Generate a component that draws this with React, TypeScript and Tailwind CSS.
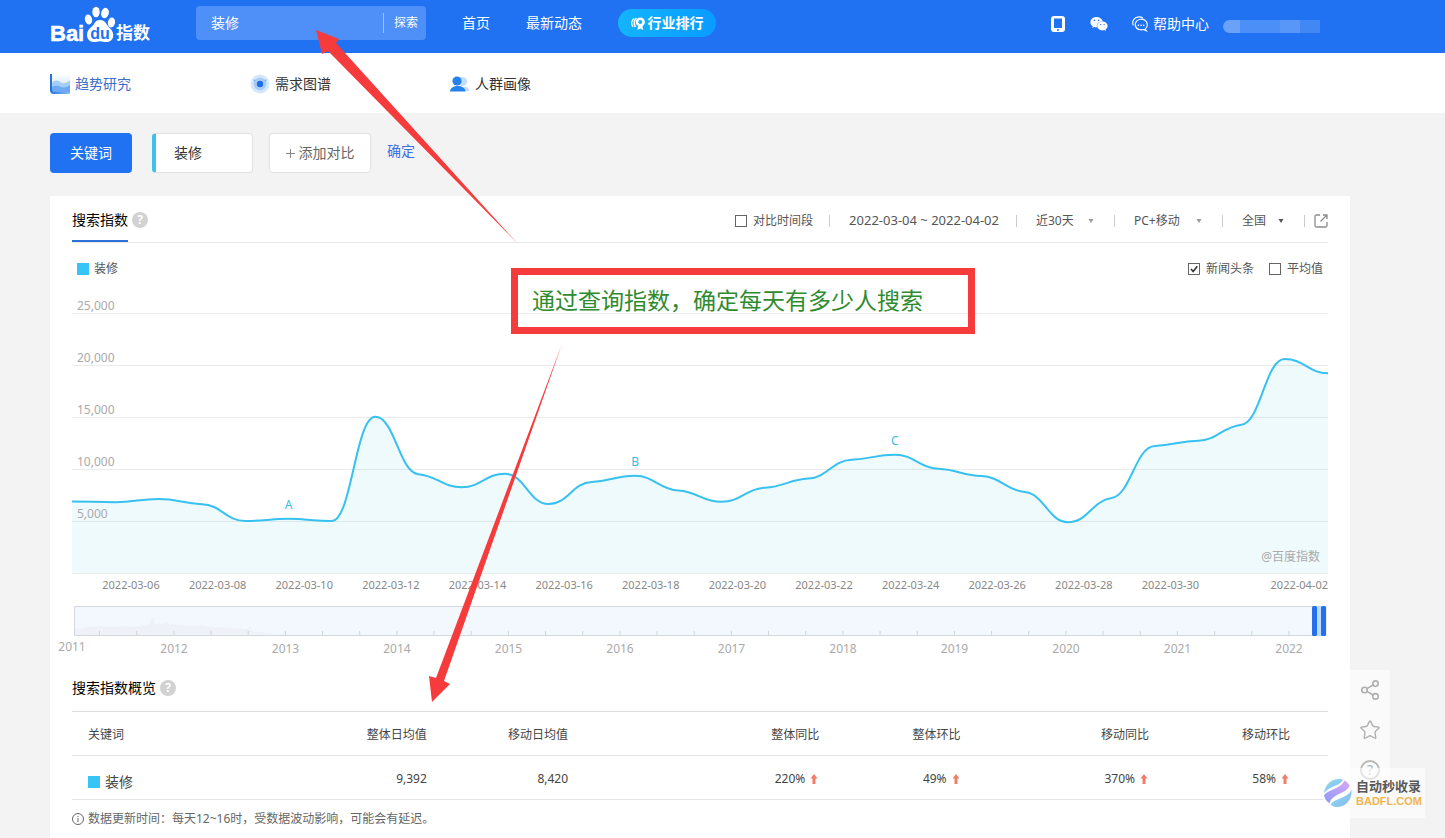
import { useState } from "react";
import { Share2, Star } from "lucide-react";
import { FaWeixin } from "react-icons/fa";

const fontClass = "font-['Noto_Sans','Noto_Sans_CJK_SC',sans-serif]";

// one value per day, 2022-03-04 to 2022-04-02
const daily = [
  6880, 6810, 7110, 6620, 5000, 5210, 4990, 15020, 9500, 8250, 9550, 6630, 8750, 9340, 7930,
  6850, 8200, 9080, 10900, 11370, 10020, 9320, 7780, 4880, 7210, 12210, 12720, 14260, 20570, 19200,
];

const CHART_W = 1256;
const STEP = CHART_W / (daily.length - 1);
const BASE = 282;

const yOf = (v: number) => BASE - (v / 5000) * 52;

function buildCurve(values: number[]) {
  const pts = values.map((v, i) => [i * STEP, yOf(v)]);
  // slope at each point, flat on peaks so that the curve never overshoots
  const slopes = pts.map((p, i) => {
    if (i === 0 || i === pts.length - 1) return 0;
    const before = (p[1] - pts[i - 1][1]) / STEP;
    const after = (pts[i + 1][1] - p[1]) / STEP;
    if (before * after <= 0) return 0;
    return (0.4 * before * after) / (before + after);
  });
  let d = `M${pts[0][0]},${pts[0][1]}`;
  for (let i = 1; i < pts.length; i++) {
    const c = STEP * 0.45;
    const [x0, y0] = pts[i - 1];
    const [x1, y1] = pts[i];
    d += `C${x0 + c},${y0 + slopes[i - 1] * c} ${x1 - c},${y1 - slopes[i] * c} ${x1},${y1}`;
  }
  return d;
}

const curve = buildCurve(daily);

const yLabels = [25000, 20000, 15000, 10000, 5000];

const xLabels = [
  "2022-03-06", "2022-03-08", "2022-03-10", "2022-03-12", "2022-03-14", "2022-03-16", "2022-03-18",
  "2022-03-20", "2022-03-22", "2022-03-24", "2022-03-26", "2022-03-28", "2022-03-30",
];

const marks = [
  { name: "A", day: 5, y: 218 },
  { name: "B", day: 13, y: 175 },
  { name: "C", day: 19, y: 154 },
];

const years = [2012, 2013, 2014, 2015, 2016, 2017, 2018, 2019, 2020, 2021, 2022];

const pct = (x: number) => `${(x / CHART_W) * 100}%`;

function Logo() {
  return (
    <svg className="block overflow-visible" width="104" height="42" viewBox="0 0 104 42" role="img" aria-label="Baidu 指数">
      <text x="0" y="35" fill="#fff" stroke="#fff" strokeWidth="0.5" fontFamily="Liberation Sans" fontWeight="700" fontSize="22">Bai</text>
      <g fill="#fff">
        <ellipse cx="38.500" cy="13.500" rx="3.600" ry="5" transform="rotate(-12 38.500 13.500)" />
        <ellipse cx="46" cy="6" rx="3.700" ry="5.200" />
        <ellipse cx="55" cy="7" rx="3.800" ry="5.200" transform="rotate(14 55 7)" />
        <ellipse cx="61.500" cy="16.500" rx="3.600" ry="5" transform="rotate(8 61.500 16.500)" />
        <path d="M50 14c-3 0-4.600 1.500-6 4-2 3.300-7 5-7 10.800 0 4.500 2.800 7.200 6.500 7.200 2.500 0 4.300-.8 6.500-.8s4 .8 6.500.8c4 0 6.800-2.700 6.800-7 0-5-4.800-7.500-6.800-11-1.400-2.500-3.500-4-6.500-4z" />
      </g>
      <text x="50" y="33" fill="#2072f3" fontFamily="Liberation Sans" fontWeight="700" fontSize="16" textAnchor="middle">du</text>
      <text x="66" y="33" fill="#fff" fontFamily="Noto Sans CJK SC" fontWeight="700" fontSize="17">指数</text>
    </svg>
  );
}

function RankIcon() {
  return (
    <svg width="14" height="13" viewBox="0 0 14 13" fill="none" stroke="#fff">
      <path d="M3 1.500C.6 3.500.2 7 2 10" strokeWidth="1.300" />
      <path d="M5.300 1C3.300 3.200 2.700 6.800 4.300 10" strokeWidth="1.500" />
      <circle cx="9.300" cy="5" r="3.300" strokeWidth="2.600" />
      <path d="M7 8.500L6.500 13l2.800-1.500L12 13l-.5-4.500z" fill="#fff" stroke="none" />
    </svg>
  );
}

function PhoneIcon() {
  return (
    <svg width="14" height="16" viewBox="0 0 14 16">
      <path fill="#fff" fillRule="evenodd" d="M3 0h8a3 3 0 013 3v10a3 3 0 01-3 3H3a3 3 0 01-3-3V3a3 3 0 013-3zm0 2.500v9.500h8V2.500zm4 10.600a1 1 0 100 2 1 1 0 000-2z" />
    </svg>
  );
}

function ChatIcon() {
  return (
    <svg width="16" height="16" viewBox="0 0 16 16" fill="none" stroke="#fff" strokeWidth="1.100" strokeLinecap="round">
      <path d="M1.200 9C-.4 4.800 2.600.9 7 .9c1.400 0 2.500.3 3.500.9" />
      <path d="M13.200 13.200c3-2.500 2.700-6.800-.2-8.900-2.600-1.800-6.300-1.400-8.400.8C2 8 3.300 13 8 13.800c1.300.2 2.400.1 3.500-.3l2.800 1.300z" />
      <path d="M6.300 9.300h.1M9 9.300h.1M11.700 9.300h.1" strokeWidth="1.600" />
    </svg>
  );
}

function TrendIcon() {
  return (
    <svg width="20" height="20" viewBox="0 0 20 20">
      <defs>
        <linearGradient id="trendSky" x1="0" y1="0" x2="0" y2="1">
          <stop offset="0" stopColor="#fff" />
          <stop offset="1" stopColor="#bfdcfa" />
        </linearGradient>
        <linearGradient id="trendBar" x1="0" y1="0" x2="1" y2="0">
          <stop offset="0" stopColor="#1f6fe0" />
          <stop offset="1" stopColor="#8fc1f7" />
        </linearGradient>
      </defs>
      <path d="M2 0h18v18H2z" fill="url(#trendSky)" />
      <path d="M2 9c3-3 5-3 8-1s6 2 10-2v12H2z" fill="#a4cdf8" />
      <path d="M2 13c4-2 6-1 9 0s6 0 9-2v7H2z" fill="#6eaaf2" />
      <path d="M0 0h2v15.500Q2 18 4.500 18H20v2H4q-4 0-4-4z" fill="url(#trendBar)" />
    </svg>
  );
}

function DemandIcon() {
  return (
    <svg width="20" height="20" viewBox="0 0 20 20">
      <circle cx="10" cy="10" r="9.500" fill="#d8e8fc" />
      <circle cx="10" cy="10" r="6.500" fill="#a9cdf8" />
      <circle cx="10" cy="10" r="3.200" fill="#1f6fe0" />
      <circle cx="4.500" cy="6.500" r="1" fill="#7fb3f5" />
      <circle cx="15.500" cy="6.500" r="1" fill="#7fb3f5" />
    </svg>
  );
}

function CrowdIcon() {
  return (
    <svg width="20" height="20" viewBox="0 0 20 20">
      <circle cx="12.500" cy="7.500" r="4.600" fill="#c3dcfb" />
      <path d="M10 17c0-4 8.500-7 9.500 0z" fill="#c3dcfb" />
      <circle cx="7" cy="7" r="4.600" fill="#2482ea" />
      <path d="M0 17.500c0-7.500 15.500-7.500 15.500 0z" fill="#2482ea" />
    </svg>
  );
}

function ExportIcon() {
  return (
    <svg width="14" height="14" viewBox="0 0 14 14" fill="none" stroke="#8c8c8c" strokeWidth="1.300">
      <path d="M6 1H2.500Q1 1 1 2.500v9Q1 13 2.500 13h9q1.500 0 1.500-1.500V8" />
      <path d="M9 1h4v4M13 1L6.500 7.500" />
    </svg>
  );
}

function HelpMark() {
  return (
    <span className="flex size-4 items-center justify-center rounded-full bg-[#d2d2d2] text-xs leading-4 font-bold text-white">?</span>
  );
}

function UpArrow() {
  return (
    <svg className="ml-[5px] inline-block" width="8" height="10" viewBox="0 0 8 10">
      <path d="M4 0l3.500 4.500H5.500V10h-3V4.500H.5z" fill="#f27c68" />
    </svg>
  );
}

const checkboxClass = "size-3 shrink-0 appearance-none border border-[#666] bg-white";

type CheckProps = { id: string; label: string; defaultChecked?: boolean };

function Check({ id, label, defaultChecked = false }: CheckProps) {
  const [on, setOn] = useState(defaultChecked);
  return (
    <span className="flex items-center gap-[6px]">
      <span className="relative flex">
        <input id={id} type="checkbox" checked={on} onChange={(e) => setOn(e.target.checked)} className={checkboxClass} />
        {on && (
          <svg className="pointer-events-none absolute inset-0" width="12" height="12" viewBox="0 0 12 12" fill="none" stroke="#333" strokeWidth="1.600">
            <path d="M3 6l2.200 2.500L9.300 3.300" />
          </svg>
        )}
      </span>
      <label htmlFor={id}>{label}</label>
    </span>
  );
}

type PickProps = { label: string; options: string[]; width: string; caret: string };

function Pick({ label, options, width, caret }: PickProps) {
  return (
    <div className="flex h-3 items-center gap-3 border-r border-[#ccc] pr-5 pl-[19px]">
      <select aria-label={label} className={`${width} appearance-none bg-transparent text-xs leading-5`}>
        {options.map((o) => (
          <option key={o}>{o}</option>
        ))}
      </select>
      <svg width="6" height="4" viewBox="0 0 6 4">
        <path d="M.5 0h5L3 4z" fill={caret} />
      </svg>
    </div>
  );
}

function Header() {
  return (
    <header className="flex h-[53px] items-start bg-[#2072f3] pr-[125px] pl-[50px] text-sm text-white">
      <a href="#" className="mt-[6px] mr-[42px] shrink-0">
        <Logo />
      </a>
      <form className="mt-[6px] flex h-[34px] w-[230px] shrink-0 items-center rounded-sm bg-[#4e90f7]" onSubmit={(e) => e.preventDefault()}>
        <input aria-label="关键词" defaultValue="装修" className="w-[187px] bg-transparent pl-[15px] leading-5 outline-none" />
        <button className="h-5 flex-1 border-l border-[#9cc1fb] pl-[2px] text-center text-xs leading-5">探索</button>
      </form>
      <nav className="ml-9 flex h-[46px] shrink-0 items-center gap-9">
        <a href="#">首页</a>
        <a href="#">最新动态</a>
        <a href="#" className="flex h-7 w-[98px] items-center justify-center gap-[3px] rounded-full bg-linear-to-r from-[#14b4fc] to-[#0a9bff] font-bold">
          <RankIcon />
          行业排行
        </a>
      </nav>
      <div className="ml-auto flex h-[47px] items-center">
        <button aria-label="手机版" className="mr-[25px]">
          <PhoneIcon />
        </button>
        <button aria-label="微信" className="mr-6">
          <FaWeixin size={18} />
        </button>
        <a href="#" className="mr-[14px] flex items-center gap-[5px]">
          <ChatIcon />
          帮助中心
        </a>
        <div className="mt-[5px] flex h-[13px] w-[97px] overflow-hidden rounded-l-full">
          <span className="w-[17px] bg-[#6aa2f8]" />
          <span className="w-[40px] bg-[#4c8ff6]" />
          <span className="w-[20px] bg-[#5896f7]" />
          <span className="flex-1 bg-[#4288f5]" />
        </div>
      </div>
    </header>
  );
}

function SubNav() {
  return (
    <nav className="flex h-[60px] items-center bg-white pt-px pl-[50px] text-sm text-[#333]">
      <a href="#" className="flex w-[200px] items-center gap-[5px] text-[#3c6ec8]">
        <TrendIcon />
        趋势研究
      </a>
      <a href="#" className="flex w-[200px] items-center gap-[5px]">
        <DemandIcon />
        需求图谱
      </a>
      <a href="#" className="flex w-[200px] items-center gap-[5px]">
        <CrowdIcon />
        人群画像
      </a>
    </nav>
  );
}

function KeywordBar() {
  return (
    <div className="flex h-10 text-sm">
      <button className="w-[82px] rounded-sm bg-[#2072f3] text-white">关键词</button>
      <input
        aria-label="关键词"
        defaultValue="装修"
        className="ml-5 w-[101px] rounded-sm border border-l-4 border-[#e0e0e0] border-l-[#3ec2ea] bg-white pl-[18px] text-[#333]"
      />
      <button className="ml-4 flex w-[102px] items-center justify-center gap-1 rounded-sm border border-[#e0e0e0] bg-white text-[#666]">
        <svg width="9" height="9" viewBox="0 0 9 9" stroke="#888">
          <path d="M4.500 0v9M0 4.500h9" />
        </svg>
        添加对比
      </button>
      <button className="ml-4 h-9 text-[#3c6fe0]">确定</button>
    </div>
  );
}

function TrendChart() {
  return (
    <svg className="block h-[302px] w-full overflow-visible" fontSize="12">
      <svg width="100%" height="302" viewBox={`0 0 ${CHART_W} 302`} preserveAspectRatio="none">
        {[...yLabels, 0].map((v) => (
          <path key={v} d={`M0,${yOf(v) + 0.5}H${CHART_W}`} stroke="#ebebeb" />
        ))}
        <path d={`${curve}V${BASE}H0Z`} fill="#2fc1e4" fillOpacity="0.08" />
        <path d={curve} fill="none" stroke="#37c1f0" strokeWidth="2" />
      </svg>
      {yLabels.map((v) => (
        <text key={v} x="5" y={yOf(v) - 3} fill="#aaa">
          {v.toLocaleString("en-US")}
        </text>
      ))}
      {marks.map((m) => (
        <text key={m.name} x={pct(m.day * STEP)} y={m.y} fill="#37bce8" textAnchor="middle">
          {m.name}
        </text>
      ))}
      <text x={pct(1248)} y="270" fill="#aaa" textAnchor="end">
        @百度指数
      </text>
      <g fill="#888" fontSize="11">
        {xLabels.map((d, i) => (
          <text key={d} x={pct(59 + i * STEP * 2)} y="298" textAnchor="middle">
            {d}
          </text>
        ))}
        <text x="100%" y="298" textAnchor="end">
          2022-04-02
        </text>
      </g>
    </svg>
  );
}

function RangeBar() {
  return (
    <svg className="block h-[52px] w-full overflow-visible" fontSize="12">
      <svg width="100%" height="30" viewBox={`0 0 ${CHART_W} 30`} preserveAspectRatio="none">
        <path d="M2.500,.5H1254V29.500H2.500z" fill="#f2f8fe" stroke="#d4d8dc" />
        <path
          d="M3 29v-6l8-1 5-1 12-1 10 1 14-1 12 1 8-2 6-1 1-6h3l1 6 10-1 2-2 2 3 12 1 14 1 6-1 10 2 20 1 16 1 3-3 3 6 30 2z"
          fill="#eef2f8"
        />
        {Array.from({ length: 33 }, (_, i) => (
          <path key={i} d={`M${27.500 + i * 37.170},25V29`} stroke="#cfd3d8" />
        ))}
        <path d="M1243 0h8v30h-8z" fill="#b9dcfb" />
        <rect x="1240" y="0" width="5" height="30" rx="1.500" fill="#2570ea" />
        <rect x="1249" y="0" width="5" height="30" rx="1.500" fill="#2570ea" />
      </svg>
      <text x="0" y="45" fill="#aaa" textAnchor="middle">
        2011
      </text>
      {years.map((y, i) => (
        <text key={y} x={pct(102 + i * 111.500)} y="47" fill="#aaa" textAnchor="middle">
          {y}
        </text>
      ))}
    </svg>
  );
}

function OverviewTable() {
  return (
    <table className="w-full table-fixed border-t border-[#ddd] text-xs text-[#444]">
      <colgroup>
        <col className="w-[17%]" />
        <col className="w-[11.25%]" />
        <col className="w-[11.25%]" />
        <col className="w-[20%]" />
        <col className="w-[11.25%]" />
        <col className="w-[15%]" />
        <col />
      </colgroup>
      <thead>
        <tr className="h-11 border-b border-[#e6e6e6] text-right">
          <th className="pt-[2px] pl-4 text-left font-normal">关键词</th>
          <th className="pt-[2px] font-normal">整体日均值</th>
          <th className="pt-[2px] font-normal">移动日均值</th>
          <th className="pt-[2px] font-normal">整体同比</th>
          <th className="pt-[2px] font-normal">整体环比</th>
          <th className="pt-[2px] font-normal">移动同比</th>
          <th className="pt-[2px] pr-[38px] font-normal">移动环比</th>
        </tr>
      </thead>
      <tbody>
        <tr className="h-11 border-b border-[#e6e6e6] text-right">
          <td className="pt-2 pl-4">
            <span className="flex items-center gap-[5px] text-sm">
              <i className="size-3 bg-[#37c5f5]" />
              装修
            </span>
          </td>
          <td className="pt-[2px]">9,392</td>
          <td className="pt-[2px]">8,420</td>
          <td className="pt-[2px] pr-px">220%<UpArrow /></td>
          <td className="pt-[2px] pr-px">49%<UpArrow /></td>
          <td className="pt-[2px] pr-px">370%<UpArrow /></td>
          <td className="pt-[2px] pr-[39px]">58%<UpArrow /></td>
        </tr>
      </tbody>
    </table>
  );
}

function SideTools() {
  return (
    <aside className="absolute top-[670px] right-[55px] flex h-[120px] w-10 flex-col items-center bg-[#fafafa] text-[#b0b0b0]">
      <button aria-label="分享" className="flex h-10 items-center">
        <Share2 size={22} strokeWidth={1.75} />
      </button>
      <button aria-label="收藏" className="flex h-10 items-center">
        <Star size={22} strokeWidth={1.5} />
      </button>
      <button aria-label="帮助" className="mt-[10px] flex size-5 items-center justify-center rounded-full border-2 border-[#b8b8b8] text-sm leading-4">
        ?
      </button>
    </aside>
  );
}

function Watermark() {
  return (
    <div className="absolute top-[768px] right-[20px] flex h-[50px] w-[102px] items-center gap-[3px] bg-white/60">
      <svg width="30" height="32" viewBox="0 0 30 32" className="shrink-0">
        <defs>
          <linearGradient id="swirlA" x1="0" y1="1" x2="1" y2="0">
            <stop offset="0" stopColor="#8b9cf5" />
            <stop offset="1" stopColor="#dba6f3" />
          </linearGradient>
          <linearGradient id="swirlB" x1="0" y1="0" x2="1" y2="1">
            <stop offset="0" stopColor="#8fe0ea" />
            <stop offset="1" stopColor="#86b6f5" />
          </linearGradient>
        </defs>
        <path d="M1 16C2 8 8 2 16 2c2 0 3 .3 4 .8C17 9 7 9 1 16z" fill="url(#swirlB)" />
        <path d="M1 18C6 12 18 12 21.500 3.500c2 1 4 3 5 5C24 17 9 16 6.500 26.500 3 24 1.500 21 1 18z" fill="url(#swirlA)" />
        <path d="M28.500 13c1 8-5 17-14 17-2.500 0-5-.8-7-2.300C11 21 24 22 28.500 13z" fill="url(#swirlB)" />
      </svg>
      <div className="font-bold whitespace-nowrap">
        <div className="text-[13px] leading-4 text-[#5a5a5a]">自动秒收录</div>
        <div className="font-['Liberation_Sans',sans-serif] text-[11px] leading-[14px] text-[#f0b54f]">BADFL.COM</div>
      </div>
    </div>
  );
}

function Annotations() {
  return (
    <>
      <svg className="pointer-events-none absolute top-0 left-0" width="600" height="710" fill="#f53b3b">
        <path d="M316 30L339 39L336 43L518 244L328 51L322 54z" />
        <path d="M562 344L444 681L450 684L432 702L429 676L436 678z" />
      </svg>
      <div className="absolute top-[268px] left-[511px] flex h-[66px] w-[464px] items-center border-[7px] border-[#f53b3b] pb-[2px] pl-[14px] text-[23px] leading-8 whitespace-nowrap text-[#2f8b30]">
        通过查询指数，确定每天有多少人搜索
      </div>
    </>
  );
}

export default function App() {
  return (
    <div lang="zh-CN" className={`relative flex min-h-screen flex-col bg-[#f3f3f3] ${fontClass}`}>
      <Header />
      <SubNav />
      <main className="flex flex-1 flex-col pt-5 pr-[95px] pl-[50px]">
        <KeywordBar />
        <section className="mt-[23px] flex-1 bg-white px-[22px] text-xs text-[#555]">
          <div className="flex h-[47px] items-stretch border-b border-[#e8e8e8]">
            <h2 className="flex items-center border-b-2 border-[#2f6fd8] pt-1 text-sm text-black">搜索指数</h2>
            <span className="ml-1 flex items-center pt-[2px]">
              <HelpMark />
            </span>
            <div className="ml-auto flex items-center pt-[3px]">
              <div className="flex h-3 items-center border-r border-[#ccc] pr-4">
                <Check id="compare" label="对比时间段" />
              </div>
              <button className="flex h-3 items-center border-r border-[#ccc] pr-[17px] pl-[19px] text-[13px]">2022-03-04 ~ 2022-04-02</button>
              <Pick label="时间" options={["近30天", "近7天"]} width="w-10" caret="#999" />
              <Pick label="设备" options={["PC+移动", "PC", "移动"]} width="w-[50px]" caret="#999" />
              <Pick label="地区" options={["全国"]} width="w-6" caret="#555" />
              <button aria-label="导出" className="ml-[9px]">
                <ExportIcon />
              </button>
            </div>
          </div>
          <div className="flex h-12 items-center justify-between pt-[3px] pr-[5px] pl-[5px]">
            <span className="flex items-center gap-[5px]">
              <i className="size-3 bg-[#37c5f5]" />
              装修
            </span>
            <div className="flex gap-[15px]">
              <Check id="news" label="新闻头条" defaultChecked />
              <Check id="average" label="平均值" />
            </div>
          </div>
          <TrendChart />
          <div className="mt-[13px]">
            <RangeBar />
          </div>
          <div className="flex h-[53px] items-center gap-1 pt-[6px]">
            <h2 className="text-sm text-black">搜索指数概览</h2>
            <HelpMark />
          </div>
          <OverviewTable />
          <p className="flex h-9 items-center gap-1 pt-px text-[#666]">
            <svg width="12" height="12" viewBox="0 0 12 12" fill="none" stroke="#666">
              <circle cx="6" cy="6" r="5.500" />
              <path d="M6 5v4M6 3v1" />
            </svg>
            数据更新时间：每天12~16时，受数据波动影响，可能会有延迟。
          </p>
        </section>
      </main>
      <SideTools />
      <Watermark />
      <Annotations />
    </div>
  );
}
